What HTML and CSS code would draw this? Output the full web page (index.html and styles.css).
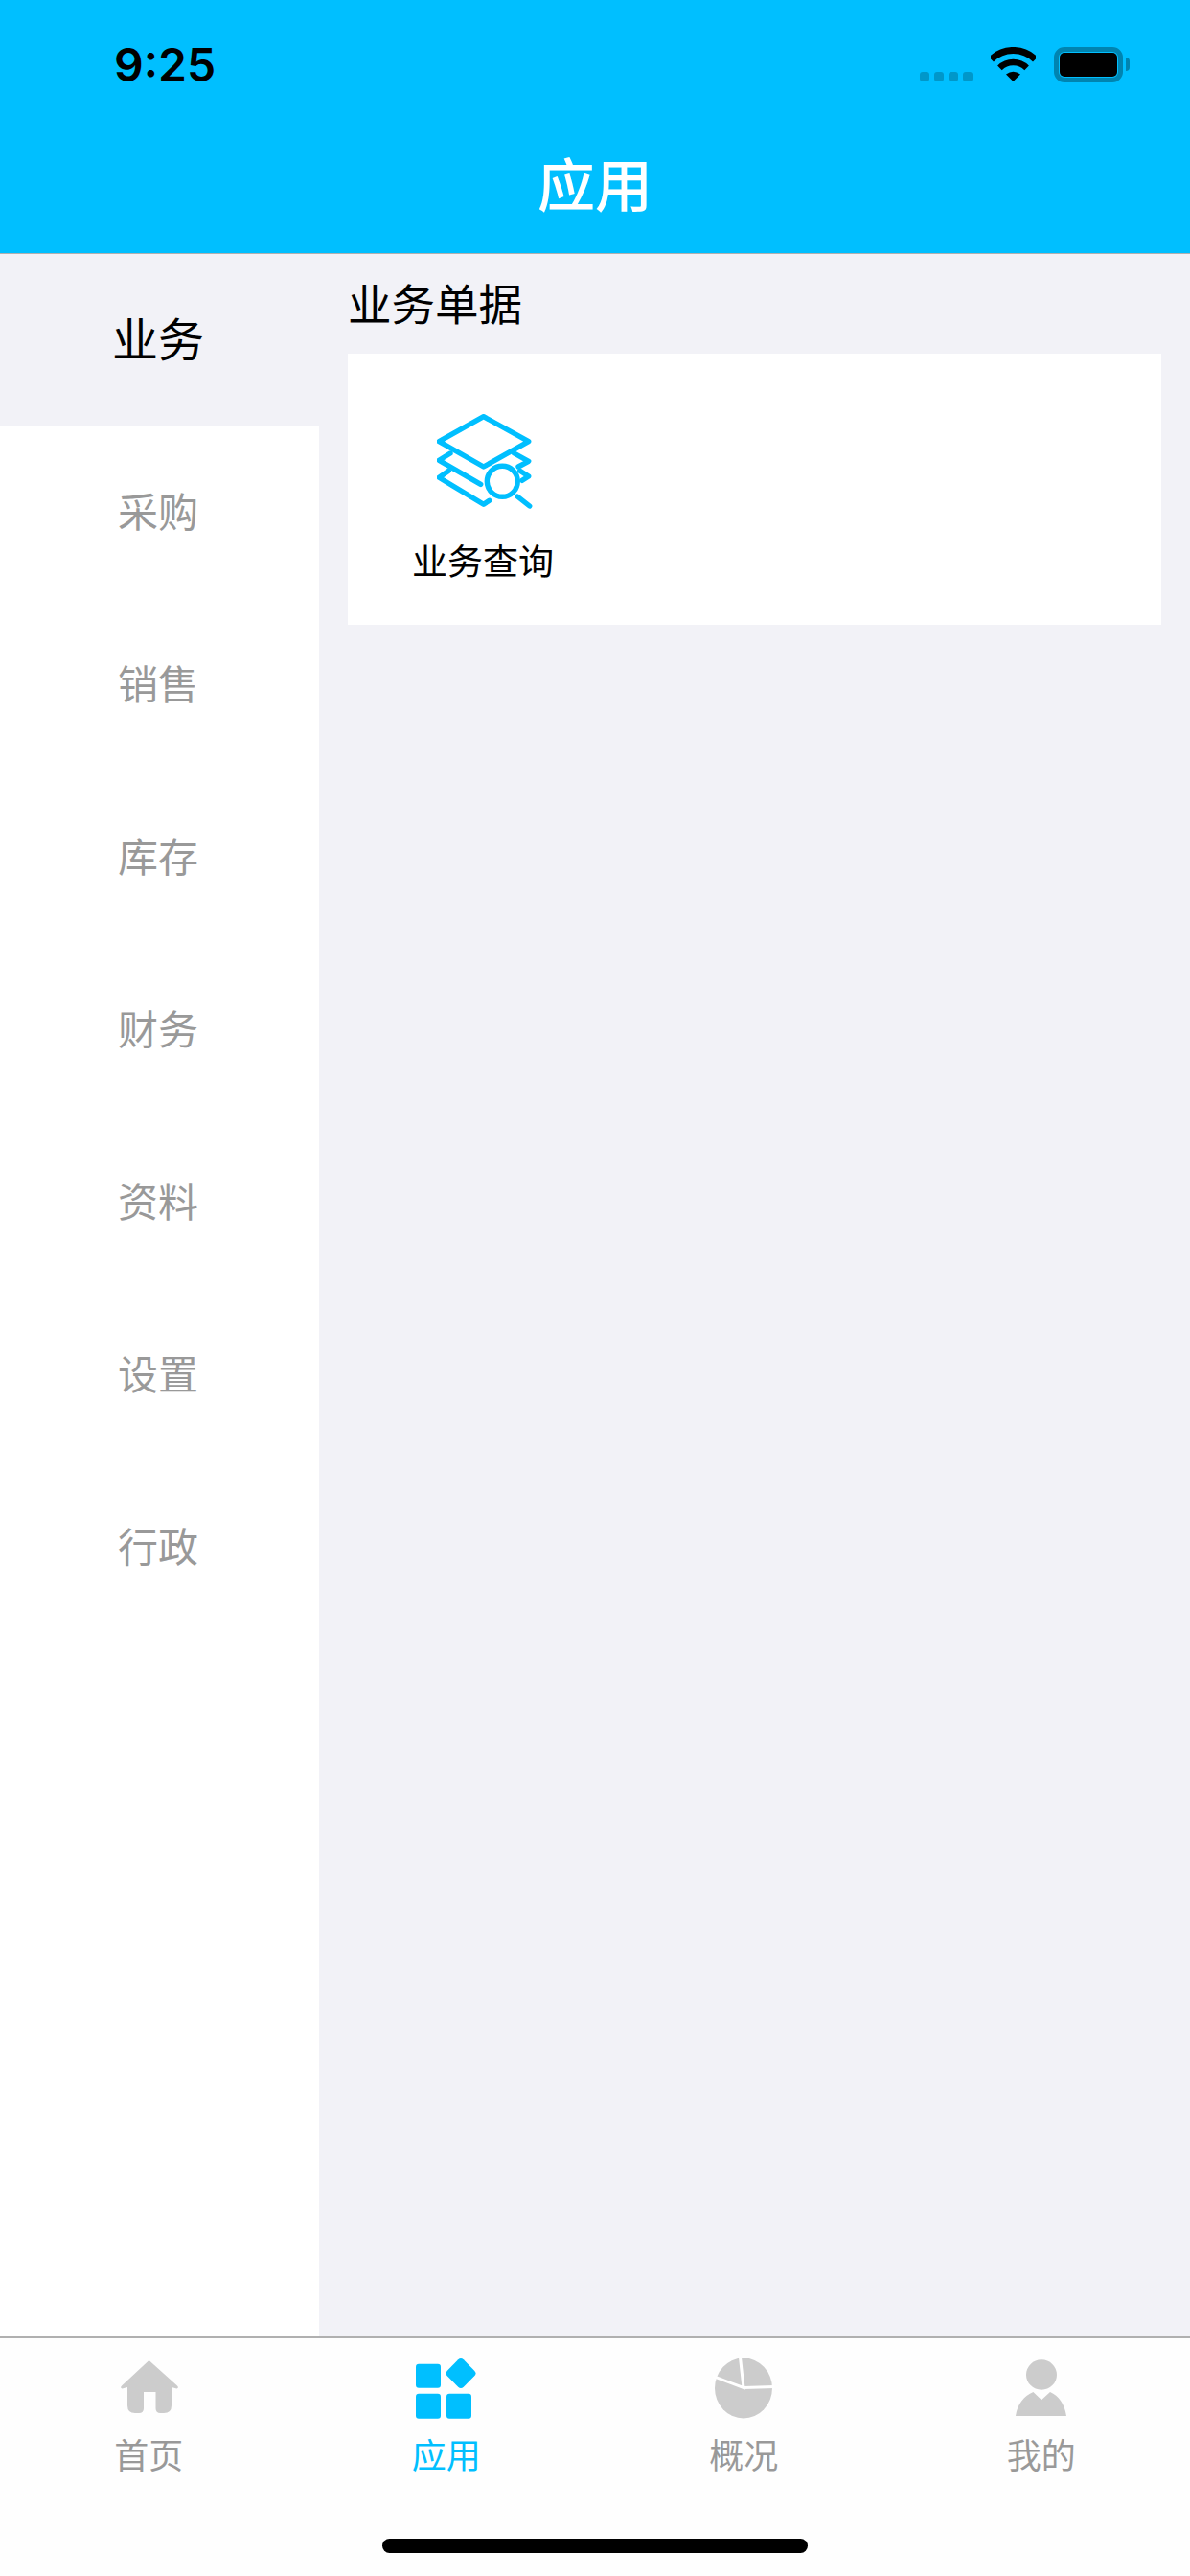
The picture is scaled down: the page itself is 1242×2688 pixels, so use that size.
FILE: index.html
```html
<!DOCTYPE html>
<html lang="zh-CN">
<head>
    <meta charset="UTF-8">
    <meta name="viewport" content="width=device-width, initial-scale=1.0">
    <title>应用</title>
    <link rel="stylesheet" href="styles.css">
</head>
<body>
    <header class="top-bar">
        <div class="status-bar">
            <span class="clock">9:25</span>
            <div class="status-icons">
                <div class="signal"><i></i><i></i><i></i><i></i></div>
                <svg class="wifi" viewBox="0 0 47 36">
                    <path d="M0.5 13A32.5 32.5 0 0 1 46.5 13" fill="none" stroke="#000" stroke-width="7"/>
                    <path d="M9.4 21.9A20 20 0 0 1 37.6 21.9" fill="none" stroke="#000" stroke-width="6.5"/>
                    <path d="M23.5 36L16 28.5Q23.5 23 31 28.5Z" fill="#000"/>
                </svg>
                <div class="battery"><div class="battery-level"></div></div>
                <div class="battery-nub"></div>
            </div>
        </div>
        <h1 class="page-title">应用</h1>
    </header>

    <div class="content">
        <nav class="side-menu">
            <div class="side-item active">业务</div>
            <div class="side-item">采购</div>
            <div class="side-item">销售</div>
            <div class="side-item">库存</div>
            <div class="side-item">财务</div>
            <div class="side-item">资料</div>
            <div class="side-item">设置</div>
            <div class="side-item">行政</div>
        </nav>
        <main class="panel">
            <h2 class="panel-title">业务单据</h2>
            <section class="card">
                <div class="card-item">
                    <svg class="query-icon" viewBox="0 0 100 100" fill="none" stroke="#00bfff" stroke-width="5.4" stroke-linecap="round" stroke-linejoin="round">
                        <path d="M48.7 2.7L95.7 28.7L48.7 55L2.3 28.7Z"/>
                        <path d="M14 41L2.3 48.3L45.7 73.3"/>
                        <path d="M80.7 41L95.7 49.3L85 55"/>
                        <path d="M12.3 59.3L2.3 66.3L48.7 94.3L54.7 90.3"/>
                        <path d="M86.7 59.3L95.7 65L89 69.3"/>
                        <circle cx="68.3" cy="70.3" r="16"/>
                        <path d="M84 86L96.7 96"/>
                    </svg>
                    <span class="card-label">业务查询</span>
                </div>
            </section>
        </main>
    </div>

    <footer class="tab-bar">
        <div class="tabs">
            <div class="tab">
                <svg class="tab-icon" viewBox="0 0 64 64">
                    <path d="M32.5 3L62 29.5Q64 31.5 61.5 32.5L56 31V50Q56 58 48 58H44.5Q39.5 58 39.5 53V36H27V53Q27 58 22 58H18Q10 58 10 50V31L4.5 32.5Q2 31.5 4 29.5Z" fill="#ccc"/>
                </svg>
                <span class="tab-label">首页</span>
            </div>
            <div class="tab current">
                <svg class="tab-icon" viewBox="0 0 64 64" fill="#00bfff">
                    <rect x="0" y="6.7" width="26" height="25" rx="3"/>
                    <rect x="0" y="37.7" width="26" height="26" rx="3"/>
                    <rect x="32" y="37.7" width="26" height="26" rx="3"/>
                    <rect x="35" y="4.5" width="24" height="24" rx="4" transform="rotate(45 47 16.5)"/>
                </svg>
                <span class="tab-label">应用</span>
            </div>
            <div class="tab">
                <svg class="tab-icon" viewBox="0 0 64 64">
                    <ellipse cx="32" cy="32" rx="30" ry="31.5" fill="#ccc"/>
                    <path d="M0 19.5L32 31.5L28.5 0M32 31.5L64 30.5" fill="none" stroke="#fff" stroke-width="3"/>
                </svg>
                <span class="tab-label">概况</span>
            </div>
            <div class="tab">
                <svg class="tab-icon" viewBox="0 0 64 64" fill="#ccc">
                    <ellipse cx="32" cy="18" rx="16" ry="15.7"/>
                    <path d="M5 61C7 48 14 40 23.4 36L32 44.3L41 36C50 40 56 48 58 61Z"/>
                </svg>
                <span class="tab-label">我的</span>
            </div>
        </div>
        <div class="home-indicator"></div>
    </footer>
</body>
</html>
```

FILE: styles.css
```css
body {
    display: flex;
    flex-direction: column;
    width: 1242px;
    height: 2688px;
    margin: 0;
    overflow: hidden;
    background: #f2f2f7;
    font-family: "Noto Sans CJK SC", "Noto Sans", sans-serif;
}

/* top blue bar */
.top-bar {
    height: 264px;
    background: #00bfff;
    border-bottom: 1px solid #b0b0b0;
    flex-shrink: 0;
}

.status-bar {
    display: flex;
    justify-content: space-between;
    align-items: flex-start;
    height: 150px;
    padding: 41px 63px 0 119px;
    box-sizing: border-box;
}

.clock {
    font-family: Inter, "Liberation Sans", sans-serif;
    font-size: 48px;
    font-weight: 600;
    line-height: 54px;
    color: #000;
}

.status-icons {
    display: flex;
    align-items: flex-start;
    padding-top: 8px;
}

.signal {
    display: flex;
    gap: 5px;
    margin-top: 26px;
    margin-right: 19px;
}

.signal i {
    width: 10px;
    height: 10px;
    border-radius: 3px;
    background: #0097c9;
}

.wifi {
    width: 47px;
    height: 36px;
    margin-right: 19px;
}

.battery {
    width: 72px;
    height: 37px;
    padding: 1px;
    box-sizing: border-box;
    border: 5px solid #0084b0;
    border-radius: 11px;
}

.battery-level {
    height: 100%;
    background: #000;
    border-radius: 5px;
}

.battery-nub {
    width: 4px;
    height: 14px;
    margin: 11px 0 0 3px;
    background: #0084b0;
    border-radius: 0 7px 7px 0;
}

.page-title {
    margin: 0;
    font-size: 60px;
    font-weight: 500;
    line-height: 80px;
    color: #fff;
    text-align: center;
}

/* middle part */
.content {
    display: flex;
    flex: 1;
    min-height: 0;
}

.side-menu {
    width: 333px;
    background: #fff;
    flex-shrink: 0;
}

.side-item {
    height: 180px;
    padding: 0 3px 7px 0;
    box-sizing: border-box;
    line-height: 173px;
    font-size: 42px;
    color: #999;
    text-align: center;
}

.side-item.active {
    background: #f2f2f7;
    font-size: 48px;
    color: #000;
}

.panel {
    flex: 1;
    padding: 0 30px 0 30px;
}

.panel-title {
    margin: 0;
    height: 104px;
    font-size: 45.5px;
    font-weight: 400;
    line-height: 100px;
    color: #000;
}

.card {
    height: 283px;
    background: #fff;
}

.card-item {
    display: flex;
    flex-direction: column;
    align-items: center;
    width: 282px;
    padding-top: 63px;
}

.query-icon {
    width: 100px;
    height: 100px;
    margin-left: 4px;
}

.card-label {
    margin-top: 29px;
    font-size: 37px;
    line-height: 46px;
    color: #000;
}

/* bottom tabs */
.tab-bar {
    display: flex;
    flex-direction: column;
    height: 250px;
    box-sizing: border-box;
    background: #fefefe;
    border-top: 2px solid #b0b0b0;
    flex-shrink: 0;
}

.tabs {
    display: flex;
}

.tab {
    display: flex;
    flex-direction: column;
    align-items: center;
    flex: 1;
    padding-top: 20px;
}

.tab-icon {
    width: 64px;
    height: 64px;
}

.tab-label {
    margin-top: 16px;
    font-size: 36px;
    line-height: 40px;
    color: #999;
}

.tab.current .tab-label {
    color: #00bfff;
}

.home-indicator {
    width: 444px;
    height: 15px;
    margin: auto auto 24px;
    background: #000;
    border-radius: 8px;
}
```
